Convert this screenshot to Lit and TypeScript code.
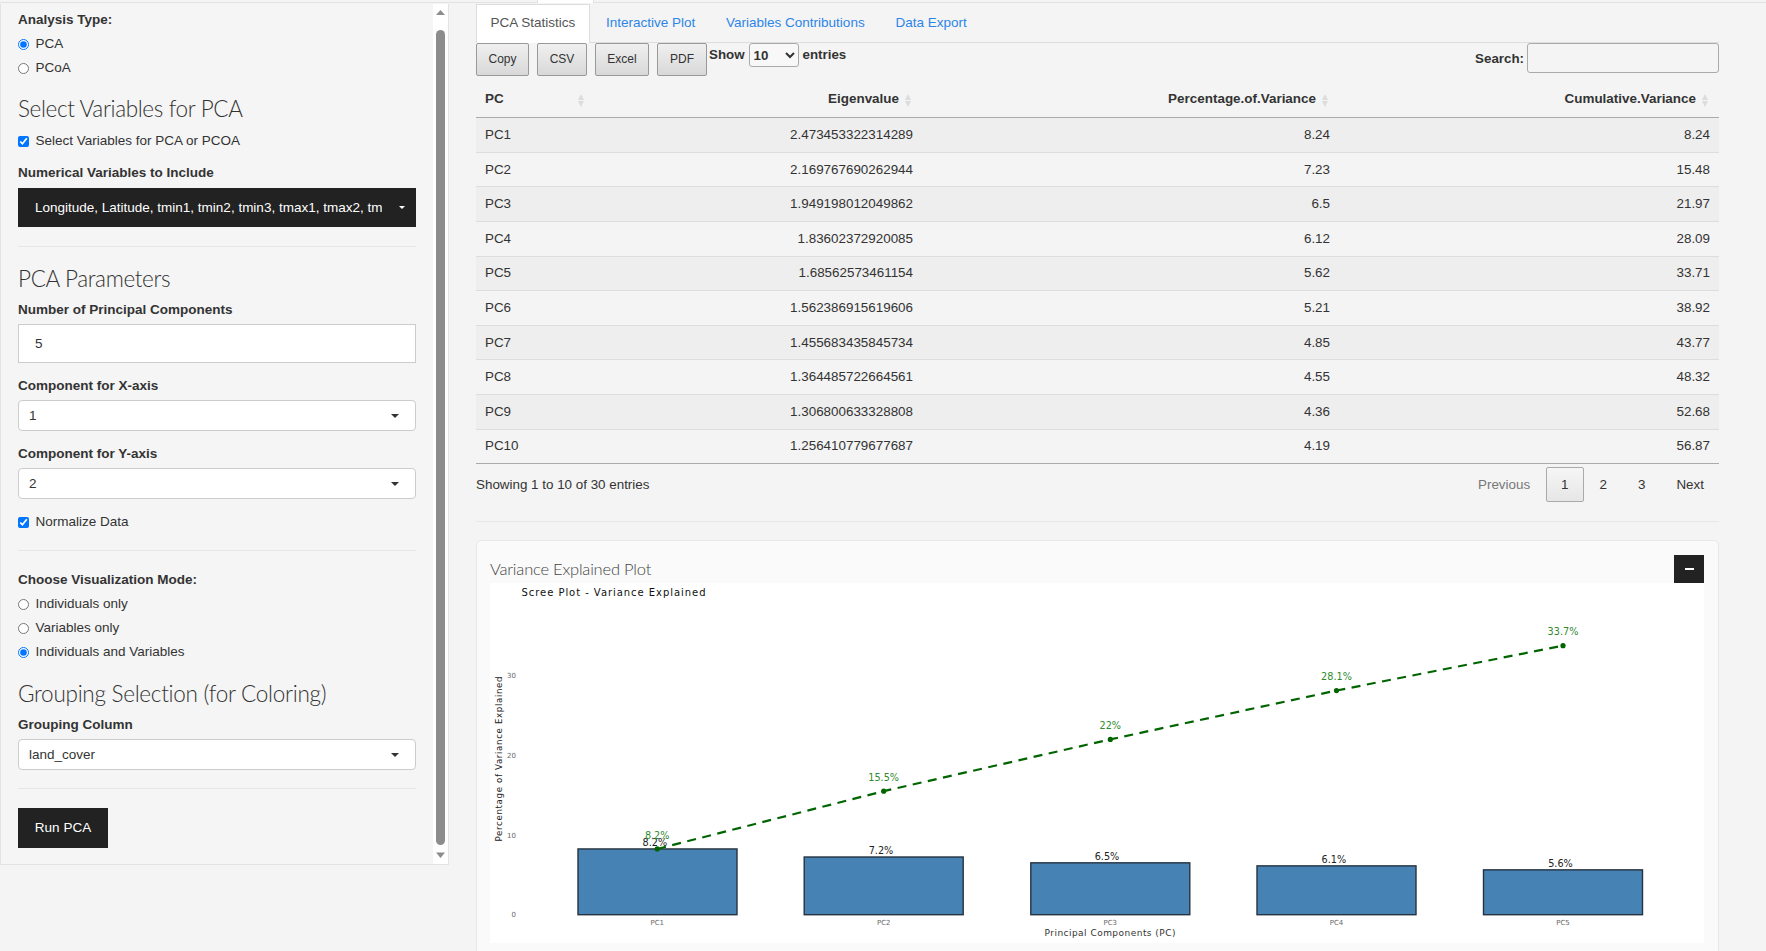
import { LitElement, html, css, svg } from 'lit';
import { customElement } from 'lit/decorators.js';

const rows = [
  ['PC1', '2.473453322314289', '8.24', '8.24'],
  ['PC2', '2.169767690262944', '7.23', '15.48'],
  ['PC3', '1.949198012049862', '6.5', '21.97'],
  ['PC4', '1.83602372920085', '6.12', '28.09'],
  ['PC5', '1.68562573461154', '5.62', '33.71'],
  ['PC6', '1.562386915619606', '5.21', '38.92'],
  ['PC7', '1.455683435845734', '4.85', '43.77'],
  ['PC8', '1.364485722664561', '4.55', '48.32'],
  ['PC9', '1.306800633328808', '4.36', '52.68'],
  ['PC10', '1.256410779677687', '4.19', '56.87'],
];

// chart coordinates are in page pixels, the svg viewBox starts at the plot corner
const BASE_Y = 915.7;
const UNIT = 7.98;
const yOf = (v: number) => BASE_Y - v * UNIT;

const bars = [
  { name: 'PC1', x: 578, w: 159, cx: 657.2, val: 8.24, cum: 8.24, label: '8.2%', cumLabel: '8.2%', lx: 654.8, ly: 843.7, gy: 836.7 },
  { name: 'PC2', x: 804.2, w: 159, cx: 883.7, val: 7.23, cum: 15.48, label: '7.2%', cumLabel: '15.5%', lx: 881, ly: 851.7, gy: 778 },
  { name: 'PC3', x: 1030.8, w: 159, cx: 1110.3, val: 6.5, cum: 21.97, label: '6.5%', cumLabel: '22%', lx: 1107, ly: 857.7, gy: 726.7 },
  { name: 'PC4', x: 1257, w: 159, cx: 1336.5, val: 6.12, cum: 28.09, label: '6.1%', cumLabel: '28.1%', lx: 1333.8, ly: 860.3, gy: 677.3 },
  { name: 'PC5', x: 1483.5, w: 159, cx: 1563, val: 5.62, cum: 33.71, label: '5.6%', cumLabel: '33.7%', lx: 1560.5, ly: 864.7, gy: 632.3 },
];

@customElement('app-root')
export class AppRoot extends LitElement {
  static styles = css`
    :host {
      display: block;
      height: 951px;
      overflow: hidden;
      background: #f4f4f4;
      font-family: 'Liberation Sans', Arial, sans-serif;
      font-size: 13.5px;
      line-height: 20px;
      color: #333;
    }
    .top-nav {
      height: 2px;
      border-bottom: 1px solid #e2e2e2;
      padding-left: 537px;
    }
    .top-nav div {
      width: 55px;
      height: 3px;
      background: #fff;
      border: 1px solid #e2e2e2;
      border-width: 0 1px;
    }
    .layout {
      display: flex;
      align-items: flex-start;
    }
    .sidebar {
      display: flex;
      width: 449px;
      margin-top: 1px;
      box-sizing: border-box;
      background: #f5f5f5;
      border: 1px solid #e3e3e3;
      border-top: none;
    }
    .side-body {
      flex: 1;
      display: flex;
      flex-direction: column;
      padding: 6px 17px 16px 17px;
    }
    .track {
      width: 15px;
      background: #fff;
      display: flex;
      flex-direction: column;
      align-items: center;
    }
    .track svg {
      display: block;
    }
    .thumb {
      flex: 1;
      width: 9px;
      margin: 10px 0 5px;
      background: #8c8c8c;
      border-radius: 5px;
    }
    .bold {
      font-weight: bold;
    }
    .radios {
      display: flex;
      flex-direction: column;
      gap: 4px;
      margin-top: 4px;
    }
    .opt {
      display: flex;
      align-items: center;
      gap: 6.5px;
      height: 20px;
    }
    .opt input {
      width: 11px;
      height: 11px;
      margin: 0;
      flex: none;
    }
    h3 {
      margin: 16px 0 7px;
      font-family: 'Lato', sans-serif;
      font-weight: 300;
      font-size: 22.5px;
      letter-spacing: -0.35px;
      line-height: 30px;
      color: #333;
    }
    h3.tight {
      margin: 1px 0 6px;
    }
    h3.group {
      margin: 16.5px 0 6.5px;
      letter-spacing: -0.27px;
    }
    .field {
      display: flex;
      flex-direction: column;
      gap: 4px;
      margin-bottom: 13px;
    }
    .field.numeric {
      margin: 12px 0 0;
    }
    .field.last {
      margin: 0;
    }
    .picker {
      height: 39px;
      background: #222;
      color: #fff;
      display: flex;
      align-items: center;
      justify-content: space-between;
      padding: 0 11px 0 17px;
      margin-top: 1px;
    }
    .picker span {
      white-space: nowrap;
      overflow: hidden;
      width: 347px;
    }
    .caret {
      width: 0;
      height: 0;
      border: 3px solid transparent;
      border-top-color: #fff;
      border-bottom: none;
    }
    .text-input {
      height: 39px;
      box-sizing: border-box;
      border: 1px solid #ccc;
      background: #fff;
      padding: 0 16px;
      display: flex;
      align-items: center;
    }
    .select {
      height: 31px;
      box-sizing: border-box;
      border: 1px solid #ccc;
      border-radius: 4px;
      background: #fff;
      padding: 0 16px 0 10px;
      display: flex;
      align-items: center;
      justify-content: space-between;
    }
    .select .caret {
      border-width: 4px;
      border-top-color: #333;
      border-bottom: none;
    }
    hr {
      width: 100%;
      margin: 18px 0 19px;
      border: none;
      border-top: 1px solid #e6e6e6;
    }
    hr.first {
      margin: 19px 0 16px;
    }
    .run {
      width: 90px;
      height: 40px;
      background: #222;
      color: #fff;
      display: flex;
      align-items: center;
      justify-content: center;
    }
    .main {
      width: 1243px;
      margin-left: 27px;
    }
    .tabs {
      display: flex;
      gap: 2px;
      height: 38.5px;
      margin-top: 0.5px;
      border-bottom: 1px solid #ddd;
    }
    .tab {
      padding: 0 13.4px;
      display: flex;
      align-items: center;
      color: #2c86e8;
      border: 1px solid transparent;
      border-bottom: none;
    }
    .tab.active {
      height: 39.5px;
      box-sizing: border-box;
      width: 113.6px;
      padding-bottom: 1px;
      background: #fff;
      color: #555;
      border-color: #ddd;
    }
    .tools {
      display: flex;
      align-items: flex-start;
      height: 34px;
      font-weight: bold;
      font-size: 13.33px;
    }
    .dt-btn {
      height: 33px;
      box-sizing: border-box;
      margin-right: 8px;
      padding-bottom: 1px;
      border: 1px solid #999;
      border-radius: 2px;
      background: linear-gradient(#f0f0f0, #d8d8d8);
      font-size: 12px;
      font-weight: normal;
      display: flex;
      align-items: center;
      justify-content: center;
    }
    .show {
      display: flex;
      align-items: center;
      gap: 4px;
      height: 24px;
      margin-left: -6px;
    }
    .show select {
      width: 50px;
      height: 24px;
      font: bold 13.33px 'Liberation Sans', Arial, sans-serif;
      color: #333;
      background: #f8f8f8;
      border: 1px solid #aaa;
      border-radius: 3px;
    }
    .search {
      margin-left: auto;
      display: flex;
      align-items: center;
      gap: 3px;
      height: 30px;
    }
    .search span {
      padding-top: 2px;
    }
    .search input {
      width: 192px;
      height: 30px;
      box-sizing: border-box;
      margin: 0;
      border: 1px solid #aaa;
      border-radius: 3px;
      background: #f4f4f4;
    }
    table {
      width: 100%;
      table-layout: fixed;
      border-collapse: separate;
      border-spacing: 0;
      font-size: 13.4px;
    }
    th {
      position: relative;
      height: 41.3px;
      box-sizing: border-box;
      padding: 3px 23px 0 9px;
      text-align: right;
      font-weight: bold;
      font-size: 13.45px;
      border-bottom: 1px solid #aaa;
    }
    th:first-child,
    td:first-child {
      text-align: left;
    }
    .sort {
      position: absolute;
      right: 11px;
      top: 17px;
      display: flex;
      flex-direction: column;
      gap: 1px;
    }
    .sort i {
      display: block;
      width: 0;
      height: 0;
      border-left: 3.5px solid transparent;
      border-right: 3.5px solid transparent;
    }
    .sort i:first-child {
      border-bottom: 6px solid #dcdcdc;
    }
    .sort i:last-child {
      border-top: 6px solid #dcdcdc;
    }
    td {
      height: 34.6px;
      box-sizing: border-box;
      padding: 0 9px;
      text-align: right;
      border-bottom: 1px solid #ddd;
    }
    tr:nth-child(odd) td {
      background: #eee;
    }
    tr:last-child td {
      border-bottom-color: #aaa;
    }
    .foot {
      display: flex;
      justify-content: space-between;
      margin-top: 3px;
      font-size: 13.4px;
    }
    .info {
      margin-top: 7.5px;
    }
    .pager {
      display: flex;
      gap: 1px;
    }
    .pager div {
      height: 35px;
      box-sizing: border-box;
      padding: 0 14px;
      border: 1px solid transparent;
      border-radius: 2px;
      display: flex;
      align-items: center;
    }
    .pager .off {
      color: #777;
    }
    .pager .on {
      border-color: #aaa;
      background: linear-gradient(#f6f6f6, #e6e6e6);
    }
    .foot-line {
      margin: 19px 0 18px;
      border-top-color: #e8e8e8;
    }
    .box {
      box-sizing: border-box;
      height: 480px;
      padding: 14px 14px 0 13px;
      background: #fafafa;
      border: 1px solid #e8e8e8;
      border-radius: 5px;
    }
    .box-head {
      display: flex;
      justify-content: space-between;
      height: 28px;
    }
    .box-title {
      font-family: 'Lato', sans-serif;
      font-weight: 300;
      font-size: 16.5px;
      letter-spacing: -0.2px;
      line-height: 28px;
      color: #444;
    }
    .collapse {
      width: 30px;
      height: 28px;
      background: #222;
      display: flex;
      align-items: center;
      justify-content: center;
    }
    .collapse div {
      width: 9px;
      height: 2px;
      background: #fff;
    }
    .plot {
      display: block;
      width: 1214px;
      height: 360px;
      background: #fff;
    }
    .plot text {
      font-family: 'DejaVu Sans', sans-serif;
    }
  `;

  private renderChart() {
    const points = bars.map(b => `${b.cx},${yOf(b.cum)}`).join(' ');
    return html`
      <svg class="plot" viewBox="490 584 1214 360">
        <text x="521.5" y="597" font-size="10" fill="#111" textLength="184">Scree Plot - Variance Explained</text>
        <text transform="translate(501.5 760) rotate(-90)" text-anchor="middle" font-size="8.6" fill="#222" textLength="165">Percentage of Variance Explained</text>
        ${[0, 10, 20, 30].map(
          v => svg`<text x="516" y=${yOf(v) + 2.6} text-anchor="end" font-size="7" fill="#666">${v}</text>`
        )}
        ${bars.map(
          b => svg`
            <rect x=${b.x} y=${yOf(b.val)} width=${b.w} height=${b.val * UNIT} fill="#4682b4" stroke="#26323f" stroke-width="1.4"></rect>
            <text x=${b.cx} y="925.8" text-anchor="middle" font-size="7" fill="#666">${b.name}</text>
            <text x=${b.lx} y=${b.ly + 3.5} text-anchor="middle" font-size="9.7" fill="#222">${b.label}</text>
          `
        )}
        <polyline points=${points} fill="none" stroke="#006400" stroke-width="2.2" stroke-dasharray="9 6.5"></polyline>
        ${bars.map(
          b => svg`
            <circle cx=${b.cx} cy=${yOf(b.cum)} r="2.6" fill="#006400"></circle>
            <text x=${b.cx} y=${b.gy + 3.5} text-anchor="middle" font-size="9.7" fill="#2f8a2f">${b.cumLabel}</text>
          `
        )}
        <text x="1110" y="936.8" text-anchor="middle" font-size="9" fill="#333" textLength="131">Principal Components (PC)</text>
      </svg>
    `;
  }

  private renderSidebar() {
    return html`
      <aside class="sidebar">
        <div class="side-body">
          <div class="bold">Analysis Type:</div>
          <div class="radios">
            <label class="opt"><input type="radio" name="type" checked />PCA</label>
            <label class="opt"><input type="radio" name="type" />PCoA</label>
          </div>
          <h3>Select Variables for PCA</h3>
          <label class="opt"><input type="checkbox" checked />Select Variables for PCA or PCOA</label>
          <div class="field numeric">
            <div class="bold">Numerical Variables to Include</div>
            <div class="picker">
              <span>Longitude, Latitude, tmin1, tmin2, tmin3, tmax1, tmax2, tm</span>
              <div class="caret"></div>
            </div>
          </div>
          <hr class="first" />
          <h3 class="tight">PCA Parameters</h3>
          <div class="field">
            <div class="bold">Number of Principal Components</div>
            <div class="text-input">5</div>
          </div>
          <div class="field">
            <div class="bold">Component for X-axis</div>
            <div class="select">1<div class="caret"></div></div>
          </div>
          <div class="field">
            <div class="bold">Component for Y-axis</div>
            <div class="select">2<div class="caret"></div></div>
          </div>
          <label class="opt"><input type="checkbox" checked />Normalize Data</label>
          <hr />
          <div class="bold">Choose Visualization Mode:</div>
          <div class="radios">
            <label class="opt"><input type="radio" name="mode" />Individuals only</label>
            <label class="opt"><input type="radio" name="mode" />Variables only</label>
            <label class="opt"><input type="radio" name="mode" checked />Individuals and Variables</label>
          </div>
          <h3 class="group">Grouping Selection (for Coloring)</h3>
          <div class="field last">
            <div class="bold">Grouping Column</div>
            <div class="select">land_cover<div class="caret"></div></div>
          </div>
          <hr />
          <div class="run">Run PCA</div>
        </div>
        <div class="track">
          <svg width="15" height="16" viewBox="0 0 15 16"><path d="M3 11 L7.5 6 L12 11 Z" fill="#8c8c8c"></path></svg>
          <div class="thumb"></div>
          <svg width="15" height="14" viewBox="0 0 15 14"><path d="M3 2.5 L12 2.5 L7.5 8 Z" fill="#8c8c8c"></path></svg>
        </div>
      </aside>
    `;
  }

  private renderTable() {
    const heads = ['PC', 'Eigenvalue', 'Percentage.of.Variance', 'Cumulative.Variance'];
    return html`
      <table>
        <colgroup>
          <col style="width:119px" />
          <col style="width:327px" />
          <col style="width:417px" />
          <col style="width:380px" />
        </colgroup>
        <thead>
          <tr>
            ${heads.map(h => html`<th>${h}<span class="sort"><i></i><i></i></span></th>`)}
          </tr>
        </thead>
        <tbody>
          ${rows.map(r => html`<tr>${r.map(c => html`<td>${c}</td>`)}</tr>`)}
        </tbody>
      </table>
    `;
  }

  render() {
    return html`
      <div class="top-nav"><div></div></div>
      <div class="layout">
        ${this.renderSidebar()}
        <main class="main">
          <nav class="tabs">
            <div class="tab active">PCA Statistics</div>
            <div class="tab">Interactive Plot</div>
            <div class="tab">Variables Contributions</div>
            <div class="tab">Data Export</div>
          </nav>
          <div class="tools">
            <div class="dt-btn" style="width:53px">Copy</div>
            <div class="dt-btn" style="width:50px">CSV</div>
            <div class="dt-btn" style="width:54px">Excel</div>
            <div class="dt-btn" style="width:50px">PDF</div>
            <div class="show">
              Show
              <select><option>10</option><option>25</option></select>
              entries
            </div>
            <div class="search"><span>Search:</span><input type="text" /></div>
          </div>
          ${this.renderTable()}
          <div class="foot">
            <div class="info">Showing 1 to 10 of 30 entries</div>
            <div class="pager">
              <div class="off">Previous</div>
              <div class="on">1</div>
              <div>2</div>
              <div>3</div>
              <div>Next</div>
            </div>
          </div>
          <hr class="foot-line" />
          <section class="box">
            <div class="box-head">
              <div class="box-title">Variance Explained Plot</div>
              <div class="collapse"><div></div></div>
            </div>
            ${this.renderChart()}
          </section>
        </main>
      </div>
    `;
  }
}
